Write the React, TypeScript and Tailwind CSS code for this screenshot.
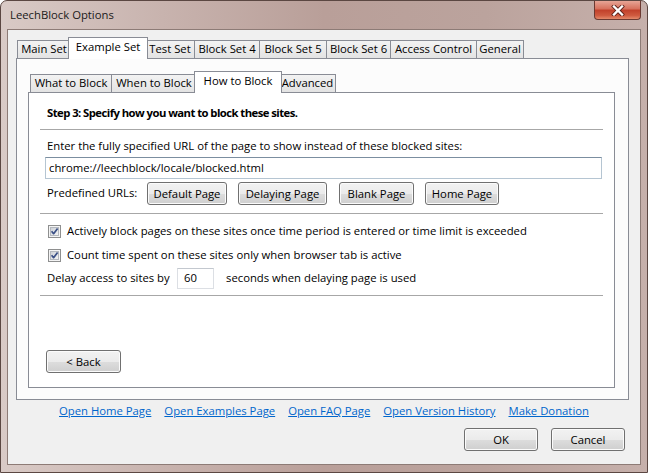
import React from "react";

function Btn({ children, className = "" }: { children: React.ReactNode; className?: string }) {
  return (
    <div
      className={`h-[23px] flex items-center justify-center rounded-[3px] border border-[#707070] bg-[linear-gradient(#f2f2f2_0%,#ebebeb_50%,#dddddd_51%,#cfcfcf_100%)] shadow-[inset_0_0_0_1px_#fbfbfb] leading-none text-black whitespace-nowrap shrink-0 ${className}`}
    >
      {children}
    </div>
  );
}

function Tab({ label, className = "", selected = false }: { label: string; className?: string; selected?: boolean }) {
  if (selected) {
    return (
      <div
        className={`relative z-10 h-[22px] -mb-px border border-b-0 border-[#898c95] bg-white flex items-center justify-center pb-[3px] whitespace-nowrap shrink-0 ${className}`}
      >
        {label}
      </div>
    );
  }
  return (
    <div
      className={`h-[18px] border border-b-0 border-[#898c95] bg-[linear-gradient(#f3f3f3,#e3e3e3)] flex items-center justify-center whitespace-nowrap shrink-0 ${className}`}
    >
      {label}
    </div>
  );
}

function Check() {
  return (
    <svg width="13" height="13" viewBox="0 0 13 13" className="shrink-0">
      <defs>
        <linearGradient id="cbg" x1="0" y1="0" x2="1" y2="1">
          <stop offset="0" stopColor="#cbcfd5" />
          <stop offset="1" stopColor="#f6f6f6" />
        </linearGradient>
      </defs>
      <rect x="0.5" y="0.5" width="12" height="12" fill="#f4f4f4" stroke="#8e8f8f" />
      <rect x="2.5" y="2.5" width="8" height="8" fill="url(#cbg)" stroke="#b4b8be" />
      <path d="M3.6 6.2 L5.6 8.7 L9.6 3.4" stroke="#3a4f86" strokeWidth="1.7" fill="none" strokeLinejoin="round" />
    </svg>
  );
}

function Hr() {
  return <div className="h-px bg-[#a7a7a7] shrink-0" />;
}

export default function App() {
  return (
    <div className="w-[648px] h-[473px] overflow-hidden bg-white font-['Open_Sans',sans-serif] text-[11.3px] text-black">
      <div className="relative w-full h-full rounded-t-[7px] border border-[#5b4742] bg-[linear-gradient(90deg,#d9cac6_0%,#c8b3ae_25%,#b99f99_50%,#bba39d_75%,#c6b0ab_100%)] flex flex-col px-[6px] pb-[7px]">
        {/* title bar */}
        <div className="h-[28px] flex items-center pl-[3px] text-[#1a1a1a] shrink-0 whitespace-nowrap">
          LeechBlock Options
        </div>
        {/* close button */}
        <div className="absolute top-0 right-[6px] w-[47px] h-[19px] rounded-b-[4px] border border-t-0 border-[#6b3a32] bg-[linear-gradient(#e7a596_0%,#d66f5b_45%,#c1402a_50%,#cf5a3f_80%,#e48a6b_100%)] flex items-center justify-center">
          <svg width="14" height="11" viewBox="0 0 14 11">
            <path d="M3 1.5 L11 9.5 M11 1.5 L3 9.5" stroke="#5a2018" strokeWidth="4" strokeLinecap="square" />
            <path d="M3 1.5 L11 9.5 M11 1.5 L3 9.5" stroke="#ffffff" strokeWidth="2.4" strokeLinecap="square" />
          </svg>
        </div>

        {/* client area */}
        <div className="flex-1 border border-[#8d7b76] bg-[#f0f0f0] flex flex-col pt-[7px]">
          {/* outer panel block */}
          <div className="ml-[8px] w-[613px] flex flex-col">
            <div className="h-[21px] flex items-end pl-[1px]">
              <Tab label="Main Set" className="w-[54px]" />
              <Tab label="Example Set" selected className="w-[80px] -ml-[3px] -mr-[2px]" />
              <Tab label="Test Set" className="w-[50px] -ml-px" />
              <Tab label="Block Set 4" className="w-[66px] -ml-px" />
              <Tab label="Block Set 5" className="w-[68px] -ml-px" />
              <Tab label="Block Set 6" className="w-[65px] -ml-px" />
              <Tab label="Access Control" className="w-[87px] -ml-px" />
              <Tab label="General" className="w-[48px] -ml-px" />
            </div>
            <div className="h-[342px] border border-[#898c95] bg-[#fcfcfc] pt-[12px] pl-[11px]">
              {/* inner tabs */}
              <div className="w-[587px] flex flex-col">
                <div className="h-[21px] flex items-end pl-[2px]">
                  <Tab label="What to Block" className="w-[82px]" />
                  <Tab label="When to Block" className="w-[86px] -ml-px" />
                  <Tab label="How to Block" selected className="w-[88px] -ml-[3px] -mr-[2px]" />
                  <Tab label="Advanced" className="w-[57px] -ml-px" />
                </div>
                <div className="h-[296px] border border-[#898c95] bg-white px-[11px] flex flex-col">
                  <div className="mt-[12px] leading-[16px] pl-[7px] font-bold tracking-[-0.55px] whitespace-nowrap">
                    Step 3: Specify how you want to block these sites.
                  </div>
                  <div className="mt-[8px]">
                    <Hr />
                  </div>
                  <div className="mt-[8px] leading-[16px] pl-[7px] whitespace-nowrap">
                    Enter the fully specified URL of the page to show instead of these blocked sites:
                  </div>
                  <div className="mt-[3px] ml-[5px] mr-[1px] h-[22px] border border-[#b5c5d2] border-t-[#7b8ea0] bg-white flex items-center pl-[3px] whitespace-nowrap">
                    chrome://leechblock/locale/blocked.html
                  </div>
                  <div className="mt-[3px] flex items-center pl-[7px]">
                    <div className="w-[100px] shrink-0 whitespace-nowrap">Predefined URLs:</div>
                    <Btn className="w-[80px]">Default Page</Btn>
                    <Btn className="w-[89px] ml-[11px]">Delaying Page</Btn>
                    <Btn className="w-[75px] ml-[12px]">Blank Page</Btn>
                    <Btn className="w-[74px] ml-[11px]">Home Page</Btn>
                  </div>
                  <div className="mt-[8px]">
                    <Hr />
                  </div>
                  <div className="mt-[5px] h-[24px] flex items-center pl-[8px] whitespace-nowrap">
                    <Check />
                    <span className="ml-[6px]">
                      Actively block pages on these sites once time period is entered or time limit is exceeded
                    </span>
                  </div>
                  <div className="h-[24px] flex items-center pl-[8px] whitespace-nowrap">
                    <Check />
                    <span className="ml-[6px]">Count time spent on these sites only when browser tab is active</span>
                  </div>
                  <div className="h-[22px] flex items-center pl-[7px] whitespace-nowrap">
                    <span className="w-[130px] shrink-0">Delay access to sites by</span>
                    <div className="w-[37px] h-[21px] border border-[#dcdfe4] border-t-[#c3c8cf] bg-white flex items-center pl-[6px] shrink-0">
                      60
                    </div>
                    <span className="ml-[12px]">seconds when delaying page is used</span>
                  </div>
                  <div className="mt-[6px]">
                    <Hr />
                  </div>
                  <div className="mt-[54px] pl-[6px]">
                    <Btn className="w-[75px]">&lt; Back</Btn>
                  </div>
                </div>
              </div>
            </div>
          </div>

          {/* links */}
          <div className="mt-[3px] leading-[16px] flex justify-center gap-[13px] text-[#0066cc] underline whitespace-nowrap">
            <span>Open Home Page</span>
            <span>Open Examples Page</span>
            <span>Open FAQ Page</span>
            <span>Open Version History</span>
            <span>Make Donation</span>
          </div>

          {/* OK / Cancel */}
          <div className="mt-[9px] flex justify-end pr-[15px] gap-[13px]">
            <Btn className="w-[74px] border-[#3c7fb1] shadow-[inset_0_0_0_1px_#cde8f7]">OK</Btn>
            <Btn className="w-[74px]">Cancel</Btn>
          </div>
        </div>
      </div>
    </div>
  );
}
